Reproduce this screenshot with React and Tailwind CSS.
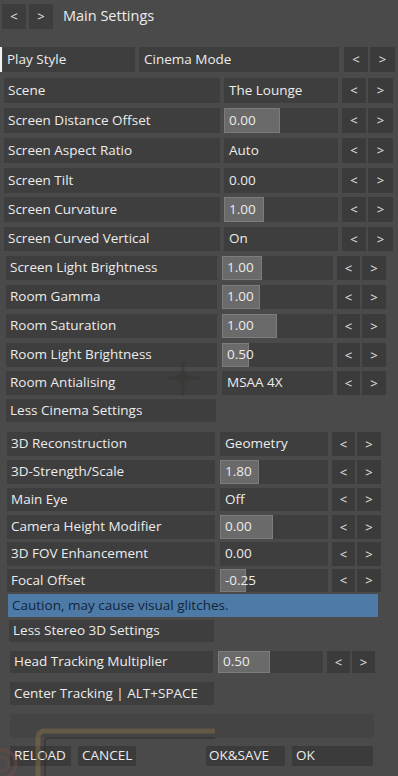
import { useState } from "react";

const PS = {
  row: "ml-[3px]",
  label: "w-[132px]",
  value: "ml-[4px] w-[200px]",
  btn1: "ml-[5px] w-[24px]",
  btn2: "ml-[2px] w-[25px]",
};
const P1 = {
  row: "ml-[4px]",
  label: "w-[216px]",
  value: "ml-[4px] w-[114px]",
  btn1: "ml-[4px] w-[24px]",
  btn2: "ml-[2px] w-[25px]",
};
const P2 = {
  row: "ml-[6px]",
  label: "w-[211px]",
  value: "ml-[5px] w-[111px]",
  btn1: "ml-[4px] w-[23px]",
  btn2: "ml-[2px] w-[24px]",
};
const P3 = {
  row: "ml-[7px]",
  label: "w-[208px]",
  value: "ml-[5px] w-[108px]",
  btn1: "ml-[4px] w-[23px]",
  btn2: "ml-[2px] w-[24px]",
};
const P4 = {
  row: "ml-[10px]",
  label: "w-[203px]",
  value: "ml-[5px] w-[105px]",
  btn1: "ml-[4px] w-[23px]",
  btn2: "ml-[2px] w-[23px]",
};

const rows = [
  { label: "Play Style", value: "Cinema Mode", g: PS, pos: "mt-[18px] h-[25px]", selected: true },
  { label: "Scene", value: "The Lounge", g: P1, pos: "mt-[6px] h-[25px]" },
  { label: "Screen Distance Offset", value: "0.00", fill: 56, g: P1, pos: "mt-[5px] h-[25px]" },
  { label: "Screen Aspect Ratio", value: "Auto", g: P1, pos: "mt-[5px] h-[25px]" },
  { label: "Screen Tilt", value: "0.00", g: P1, pos: "mt-[5px] h-[25px]" },
  { label: "Screen Curvature", value: "1.00", fill: 40, g: P1, pos: "mt-[4px] h-[25px]" },
  { label: "Screen Curved Vertical", value: "On", g: P1, pos: "mt-[5px] h-[24px]" },
  { label: "Screen Light Brightness", value: "1.00", fill: 40, g: P2, pos: "mt-[5px] h-[24px]" },
  { label: "Room Gamma", value: "1.00", fill: 38, g: P2, pos: "mt-[5px] h-[24px]" },
  { label: "Room Saturation", value: "1.00", fill: 55, g: P2, pos: "mt-[5px] h-[24px]" },
  { label: "Room Light Brightness", value: "0.50", fill: 27, g: P2, pos: "mt-[5px] h-[24px]" },
  { label: "Room Antialising", value: "MSAA 4X", g: P2, pos: "mt-[4px] h-[24px]" },
  { label: "Less Cinema Settings", single: true, g: P2, pos: "mt-[4px] h-[23px]", w: "w-[210px]" },
  { label: "3D Reconstruction", value: "Geometry", g: P3, pos: "mt-[10px] h-[24px]" },
  { label: "3D-Strength/Scale", value: "1.80", fill: 39, g: P3, pos: "mt-[4px] h-[24px]" },
  { label: "Main Eye", value: "Off", g: P3, pos: "mt-[4px] h-[23px]" },
  { label: "Camera Height Modifier", value: "0.00", fill: 53, g: P3, pos: "mt-[4px] h-[24px]" },
  { label: "3D FOV Enhancement", value: "0.00", g: P3, pos: "mt-[3px] h-[24px]" },
  { label: "Focal Offset", value: "-0.25", fill: 26, g: P3, pos: "mt-[3px] h-[23px]" },
];

function ArrowBtn({ dir, cls }) {
  return (
    <div className={`${cls} h-full bg-[#3b3b3b] flex items-center justify-center text-[#e6e6e6] text-[13px]`}>
      {dir}
    </div>
  );
}

function SettingRow({ row }) {
  const { g } = row;
  if (row.single) {
    return (
      <div className={`${row.pos} ${g.row} ${row.w} bg-[#3e3e3e] flex items-center pl-[4px] text-[#ececec]`}>
        {row.label}
      </div>
    );
  }
  return (
    <div className={`${row.pos} flex items-stretch relative`}>
      {row.selected && <div className="absolute left-0 top-0 h-full w-[2px] bg-[#f2f2f2]" />}
      <div className={`${g.row} ${g.label} bg-[#3e3e3e] flex items-center pl-[4px] text-[#ececec] whitespace-nowrap`}>
        {row.label}
      </div>
      <div className={`${g.value} bg-[#3e3e3e] relative flex items-center`}>
        {row.fill && (
          <div
            className="absolute left-0 top-0 h-full bg-[#6a6a6a] border border-[#7c7c7c]"
            style={{ width: row.fill }}
          />
        )}
        <span className="relative pl-[5px] text-[#ececec] whitespace-nowrap">{row.value}</span>
      </div>
      <ArrowBtn dir="<" cls={g.btn1} />
      <ArrowBtn dir=">" cls={g.btn2} />
    </div>
  );
}

export default function App() {
  const [rowsState] = useState(rows);

  return (
    <div
      className="w-[398px] h-[776px] bg-[#4a4a4a] overflow-hidden relative text-[13.5px] leading-none"
      style={{ fontFamily: '"Open Sans", "Noto Sans", sans-serif' }}
    >
      <div className="relative flex flex-col">
        <div className="mt-[4px] h-[25px] flex items-center">
          <div className="ml-[2px] w-[24px] h-full bg-[#3d3d3d] flex items-center justify-center text-[#e6e6e6] text-[13px]">&lt;</div>
          <div className="ml-[3px] w-[24px] h-full bg-[#3d3d3d] flex items-center justify-center text-[#e6e6e6] text-[13px]">&gt;</div>
          <div className="ml-[10px] text-[14.5px] text-[#ececec]">Main Settings</div>
        </div>

        {rowsState.map((r) => (
          <SettingRow key={r.label} row={r} />
        ))}

        <div className="mt-[2px] ml-[8px] w-[370px] h-[23px] bg-[#4d7aa6] flex items-center pl-[4px] text-[#12263a]">
          Caution, may cause visual glitches.
        </div>

        <div className="mt-[3px] ml-[9px] w-[205px] h-[22px] bg-[#3e3e3e] flex items-center pl-[4px] text-[#ececec]">
          Less Stereo 3D Settings
        </div>

        <SettingRow row={{ label: "Head Tracking Multiplier", value: "0.50", fill: 52, g: P4, pos: "mt-[9px] h-[22px]" }} />

        <div className="mt-[9px] ml-[10px] w-[204px] h-[23px] bg-[#3e3e3e] flex items-center pl-[4px] text-[#ececec]">
          Center Tracking | ALT+SPACE
        </div>

        <div className="mt-[9px] ml-[10px] w-[364px] h-[24px] bg-[#444444]" />

        <div className="mt-[8px] h-[20px] flex items-stretch text-[#ececec]">
          <div className="ml-[10px] w-[61px] bg-[#3b3b3b] flex items-center pl-[4px]">RELOAD</div>
          <div className="ml-[7px] w-[58px] bg-[#3b3b3b] flex items-center pl-[4px]">CANCEL</div>
          <div className="ml-[70px] w-[79px] bg-[#3b3b3b] flex items-center pl-[3px]">OK&amp;SAVE</div>
          <div className="ml-[7px] w-[81px] bg-[#3b3b3b] flex items-center pl-[4px]">OK</div>
        </div>
      </div>

      {/* background scenery showing through the translucent menu */}
      <svg className="absolute left-0 top-0 pointer-events-none" width="398" height="776">
        <g stroke="#33332f" strokeWidth="3" fill="none" opacity="0.45">
          <line x1="167" y1="378" x2="200" y2="378" />
          <line x1="183" y1="362" x2="183" y2="396" />
          <circle cx="183" cy="378" r="4" />
        </g>
        <g opacity="0.45" fill="none">
          <path d="M38 776 V738 Q38 731 45 731 H215" stroke="#8a7447" strokeWidth="5" />
          <path d="M45 776 V742 Q45 738 49 738 H215" stroke="#2f2a22" strokeWidth="2" />
          <circle cx="2" cy="764" r="14" stroke="#7a4a44" strokeWidth="3" />
          <circle cx="2" cy="764" r="7" stroke="#7a4a44" strokeWidth="2" />
        </g>
      </svg>
    </div>
  );
}
